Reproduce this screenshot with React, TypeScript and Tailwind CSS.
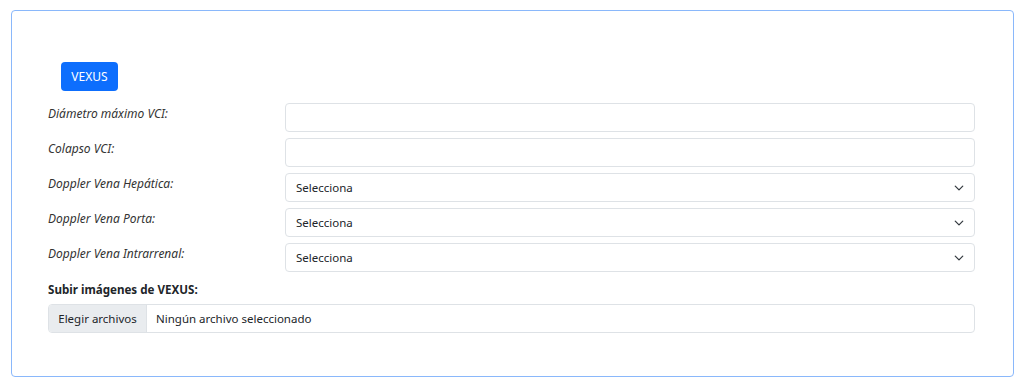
import React from "react";

const font = { fontFamily: '"Noto Sans", "Open Sans", sans-serif' };

function Chevron() {
  return (
    <svg width="10" height="10" viewBox="0 0 16 16" className="shrink-0">
      <path d="M2 5l6 6 6-6" fill="none" stroke="#343a40" strokeWidth="2" strokeLinecap="round" strokeLinejoin="round" />
    </svg>
  );
}

function Row({ label, select }: { label: string; select?: boolean }) {
  return (
    <div className="flex items-start">
      <div className="w-[237px] pt-[3px] text-[12px] italic text-[#333] leading-[16px]">{label}</div>
      {select ? (
        <div className="flex h-[29px] w-[690px] items-center justify-between rounded-[4px] border border-[#dee2e6] bg-white pl-[10px] pr-[10px] text-[11.5px] text-[#212529]">
          <span>Selecciona</span>
          <Chevron />
        </div>
      ) : (
        <div className="h-[29px] w-[690px] rounded-[4px] border border-[#dee2e6] bg-white" />
      )}
    </div>
  );
}

export default function App() {
  return (
    <div className="h-[386px] w-[1024px] bg-white pl-[11px] pt-[10px]" style={font}>
      <div className="h-[367px] w-[1003px] rounded-[4px] border border-[#8ab8fb] pl-[36px] pt-[51px]">
        <div className="ml-[13px] flex h-[29px] w-[57px] items-center justify-center rounded-[4px] bg-[#0d6efd] text-[12px] text-white">
          VEXUS
        </div>
        <div className="mt-[12px] flex flex-col gap-[6px]">
          <Row label="Diámetro máximo VCI:" />
          <Row label="Colapso VCI:" />
          <Row label="Doppler Vena Hepática:" select />
          <Row label="Doppler Vena Porta:" select />
          <Row label="Doppler Vena Intrarrenal:" select />
        </div>
        <div className="mt-[10px] text-[11.6px] font-bold text-[#212529] leading-[16px]">Subir imágenes de VEXUS:</div>
        <div className="mt-[6px] flex h-[29px] w-[927px] items-stretch overflow-hidden rounded-[4px] border border-[#dee2e6] text-[11.5px] text-[#212529]">
          <div className="flex w-[98px] items-center justify-center border-r border-[#dee2e6] bg-[#e9ecef]">Elegir archivos</div>
          <div className="flex items-center pl-[9px]">Ningún archivo seleccionado</div>
        </div>
      </div>
    </div>
  );
}
